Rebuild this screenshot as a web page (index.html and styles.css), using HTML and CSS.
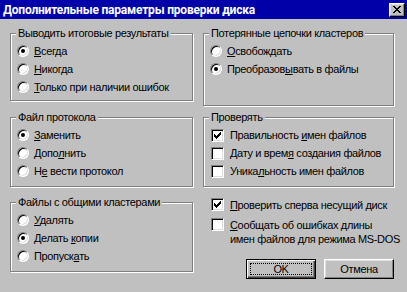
FILE: index.html
```html
<!DOCTYPE html>
<html lang="ru">
<head>
<meta charset="utf-8">
<title>Дополнительные параметры проверки диска</title>
<link rel="stylesheet" href="styles.css">
</head>
<body>
<div class="dialog">
  <div class="titlebar">
    <span class="title">Дополнительные параметры проверки диска</span>
    <span class="close"><svg width="8" height="7" viewBox="0 0 8 7"><path fill="#000" d="M0 0h2v1H0z M6 0h2v1H6z M1 1h2v1H1z M5 1h2v1H5z M2 2h4v1H2z M3 3h2v1H3z M2 4h4v1H2z M1 5h2v1H1z M5 5h2v1H5z M0 6h2v1H0z M6 6h2v1H6z"/></svg></span>
  </div>
  <div class="content">
    <div class="col col-left">
      <div class="group group-summary">
        <div class="group-title">Выводить итоговые результаты</div>
        <div class="options">
          <div class="option"><span class="radio on"></span><span><u>В</u>сегда</span></div>
          <div class="option"><span class="radio"></span><span><u>Н</u>икогда</span></div>
          <div class="option"><span class="radio"></span><span><u>Т</u>олько при наличии ошибок</span></div>
        </div>
      </div>
      <div class="group group-log">
        <div class="group-title">Файл протокола</div>
        <div class="options">
          <div class="option"><span class="radio on"></span><span><u>З</u>аменить</span></div>
          <div class="option"><span class="radio"></span><span>Допо<u>л</u>нить</span></div>
          <div class="option"><span class="radio"></span><span>Н<u>е</u> вести протокол</span></div>
        </div>
      </div>
      <div class="group group-shared">
        <div class="group-title">Файлы с общими кластерами</div>
        <div class="options">
          <div class="option"><span class="radio"></span><span><u>У</u>далять</span></div>
          <div class="option"><span class="radio on"></span><span>Делать <u>к</u>опии</span></div>
          <div class="option"><span class="radio"></span><span>Пропуск<u>а</u>ть</span></div>
        </div>
      </div>
    </div>
    <div class="col col-right">
      <div class="group group-lost">
        <div class="group-title">Потерянные цепочки кластеров</div>
        <div class="options">
          <div class="option"><span class="radio"></span><span><u>О</u>свобождать</span></div>
          <div class="option"><span class="radio on"></span><span>Преобразов<u>ы</u>вать в файлы</span></div>
        </div>
      </div>
      <div class="group group-verify">
        <div class="group-title">Проверять</div>
        <div class="options">
          <div class="option"><span class="check"><svg width="11" height="11" viewBox="0 0 11 11"><path fill="#000" d="M2 4h1v3H2z M3 5h1v3H3z M4 6h1v3H4z M5 5h1v3H5z M6 4h1v3H6z M7 3h1v3H7z M8 2h1v3H8z"/></svg></span><span>Правильность <u>и</u>мен файлов</span></div>
          <div class="option"><span class="check"></span><span>Дату и врем<u>я</u> создания файлов</span></div>
          <div class="option"><span class="check"></span><span>Уника<u>л</u>ьность имен файлов</span></div>
        </div>
      </div>
      <div class="extra">
        <div class="option option-wrap"><span class="check"><svg width="11" height="11" viewBox="0 0 11 11"><path fill="#000" d="M2 4h1v3H2z M3 5h1v3H3z M4 6h1v3H4z M5 5h1v3H5z M6 4h1v3H6z M7 3h1v3H7z M8 2h1v3H8z"/></svg></span><span><u>П</u>роверить сперва несущий диск</span></div>
        <div class="option option-wrap"><span class="check"></span><span><u>С</u>ообщать об ошибках длины<br>имен файлов для режима MS-DOS</span></div>
      </div>
      <div class="buttons">
        <div class="btn btn-default"><span class="btn-face">OK</span></div>
        <div class="btn"><span class="btn-face">Отмена</span></div>
      </div>
    </div>
  </div>
</div>
</body>
</html>
```
FILE: styles.css
```css
* { box-sizing: border-box; }
body {
  margin: 0;
  width: 407px;
  height: 292px;
  overflow: hidden;
  background: #c0c0c0;
  font-family: "Liberation Sans", Arial, sans-serif;
  font-size: 11px;
  letter-spacing: -0.35px;
  color: #000;
}
u { text-decoration: underline; text-underline-offset: 1px; }

.titlebar {
  height: 19px;
  background: #0000a8;
  display: flex;
  align-items: center;
  justify-content: space-between;
  padding: 0 2px 0 3px;
}
.title {
  color: #fff;
  font-family: Roboto, "Liberation Sans", sans-serif;
  font-weight: 700;
  font-size: 12px;
  letter-spacing: -0.2px;
}
.close {
  width: 16px;
  height: 14px;
  background: #c0c0c0;
  border: 1px solid;
  border-color: #fff #000 #000 #fff;
  box-shadow: inset -1px -1px #808080, inset 1px 1px #dfdfdf;
  display: flex;
  align-items: center;
  justify-content: center;
}
.close svg { display: block; }

.content {
  display: flex;
  gap: 10px;
  padding: 14px 0 0 10px;
}
.col { display: flex; flex-direction: column; }
.col-left { width: 183px; }
.col-right { width: 191px; }

.group {
  border: 1px solid #808080;
  box-shadow: inset 1px 1px #fff, 1px 1px #fff;
  display: flex;
  flex-direction: column;
  align-items: flex-start;
  padding: 0 6px;
}
.group-title {
  margin: -7px 0 0 -1px;
  padding: 0 2px;
  line-height: 13px;
  background: #c0c0c0;
  white-space: nowrap;
}
.group-summary { height: 68px; }
.group-lost { height: 73px; }
.group-log { height: 70px; margin-top: 16px; }
.group-verify { height: 70px; margin-top: 11px; }
.group-shared { height: 70px; margin-top: 15px; }

.options { display: flex; flex-direction: column; padding-top: 2px; }
.option {
  display: flex;
  align-items: center;
  height: 18px;
  white-space: nowrap;
}

.radio {
  position: relative;
  flex: none;
  width: 12px;
  height: 12px;
  margin-right: 5px;
  border-radius: 50%;
  background: #fff;
  border: 1px solid;
  border-color: #808080 #fff #fff #808080;
  box-shadow: inset 1px 1px #000, inset -1px -1px #dfdfdf;
}
.radio.on::after {
  content: "";
  position: absolute;
  left: 3px;
  top: 3px;
  width: 4px;
  height: 4px;
  border-radius: 50%;
  background: #000;
}

.check {
  flex: none;
  width: 13px;
  height: 13px;
  margin: 0 6px 0 1px;
  background: #fff;
  border: 1px solid;
  border-color: #808080 #fff #fff #808080;
  box-shadow: inset 1px 1px #000, inset -1px -1px #dfdfdf;
}
.check svg { display: block; }

.extra {
  display: flex;
  flex-direction: column;
  gap: 6px;
  margin-top: 11px;
  padding-left: 7px;
}
.option-wrap {
  height: auto;
  align-items: flex-start;
  line-height: 14px;
}

.buttons {
  display: flex;
  justify-content: flex-end;
  gap: 8px;
  margin-top: 13px;
}
.btn {
  width: 70px;
  height: 20px;
  display: flex;
  padding: 3px;
  border: 1px solid;
  border-color: #fff #000 #000 #fff;
  box-shadow: inset -1px -1px #808080, inset 1px 1px #dfdfdf;
}
.btn-default {
  border-color: #000;
  box-shadow: inset 1px 1px #fff, inset -1px -1px #404040, inset -2px -2px #808080;
}
.btn-face {
  flex: 1;
  display: flex;
  align-items: center;
  justify-content: center;
  border: 1px solid transparent;
  line-height: 12px;
}
.btn-default .btn-face { border: 1px dotted #000; }
```
